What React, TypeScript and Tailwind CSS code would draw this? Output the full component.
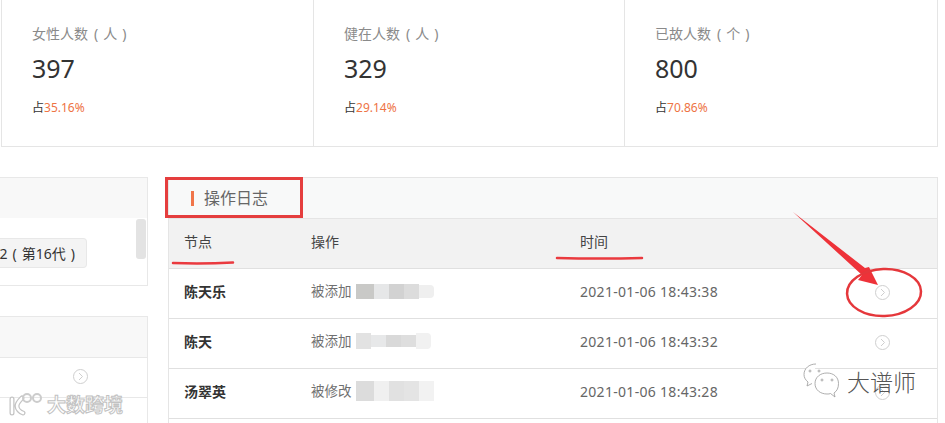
import React from 'react';

const cjk = "font-['Noto_Sans','Noto_Sans_CJK_SC',sans-serif]";

const stats = [
  { label: '女性人数', unit: '人', value: '397', pct: '35.16%', width: 'w-[312px]' },
  { label: '健在人数', unit: '人', value: '329', pct: '29.14%', width: 'w-[311px]' },
  { label: '已故人数', unit: '个', value: '800', pct: '70.86%', width: 'flex-1' },
];

const rows = [
  {
    name: '陈天乐',
    op: '被添加',
    time: '2021-01-06 18:43:38',
    blur: ['bg-[#c9c9c7] h-[15px] w-[18px]', 'bg-[#e6e7e8] h-[15px] w-[15px]', 'bg-[#d2d2d2] h-[15px] w-[15px]', 'bg-[#dcdcdc] h-[15px] w-[15px]', 'bg-[#efefef] h-[13px] w-[15px] rounded-r-[4px]'],
  },
  {
    name: '陈天',
    op: '被添加',
    time: '2021-01-06 18:43:32',
    blur: ['bg-[#e2e2e2] h-[16px] w-[15px]', 'bg-[#e7e8e9] h-[12px] w-[15px]', 'bg-[#d9d9d9] h-[12px] w-[15px]', 'bg-[#dedede] h-[12px] w-[15px]', 'bg-[#f1f1f1] h-[16px] w-[15px] rounded-r-[4px]'],
  },
  {
    name: '汤翠英',
    op: '被修改',
    time: '2021-01-06 18:43:28',
    blur: ['bg-[#dcdcdc] h-[20px] w-[18px]', 'bg-[#f0f0f0] h-[20px] w-[15px]', 'bg-[#e1e1e1] h-[20px] w-[15px]', 'bg-[#e4e4e4] h-[20px] w-[15px]', 'bg-[#f2f2f2] h-[20px] w-[15px]'],
  },
];

const ArrowCircle = () => (
  <svg width="15" height="15" viewBox="0 0 15 15" fill="none" stroke="#cfcfcf" strokeWidth="1">
    <circle cx="7.500" cy="7.500" r="7" />
    <path d="M6 4l3.500 3.500L6 11" />
  </svg>
);

const Annotations = () => (
  <svg className="absolute left-0 top-0 pointer-events-none" width="945" height="423" viewBox="0 0 945 423" fill="none">
    <rect x="166.500" y="178.500" width="135" height="38" stroke="#e53e3e" strokeWidth="3" />
    <path d="M173 263 Q203 264 233 262.500" stroke="#ea3a3f" strokeWidth="2.500" strokeLinecap="round" />
    <path d="M557 258 Q600 259 642 258" stroke="#ea3a3f" strokeWidth="2.500" strokeLinecap="round" />
    <path d="M793 212 L865 268 L869 267 L878 285 L858 280 L862 275 Z" fill="#ee3239" />
    <ellipse cx="884" cy="292.500" rx="37" ry="23.500" stroke="#e5373b" strokeWidth="2.500" transform="rotate(-2 884 292)" />
  </svg>
);

const Watermarks = () => (
  <>
    <div className="absolute left-[9px] top-[391px] flex items-center gap-[4px]">
      <svg width="34" height="26" viewBox="0 0 34 26" fill="none" strokeLinecap="round">
        <g stroke="#c4c4c4" strokeWidth="5">
          <path d="M3 8v14M13 7C9 11 8 13 8 15c0 3 3 6 6 7" />
        </g>
        <g stroke="#fff" strokeWidth="2.500">
          <path d="M3 8v14M13 7C9 11 8 13 8 15c0 3 3 6 6 7" />
        </g>
        <circle cx="18" cy="7" r="4" stroke="#cccccc" strokeWidth="2" />
        <circle cx="28" cy="7" r="4" stroke="#cccccc" strokeWidth="2" />
      </svg>
      <span className="text-[19px] leading-[26px] font-bold text-white [-webkit-text-stroke:1px_#c2c2c2] font-['Noto_Sans_CJK_SC',sans-serif]">大数跨境</span>
    </div>
    <div className="absolute left-[803px] top-[363px] flex items-center gap-[8px]">
      <svg width="36" height="35" viewBox="0 0 36 35" fill="none" stroke="#999" strokeWidth="0.8">
        <path d="M13 1C6 1 1 5.500 1 11.500c0 3 1.500 5.500 4 7.500l-1 4 5-2.500" fill="#fff" />
        <path d="M24 10c-6.500 0-12 4-12 10.500s5.500 10.500 12 10.500c1.500 0 2.500 0 3.500-.5L32 34l-1-4c3-2 4.500-5 4.500-9.500C35.500 14 30.500 10 24 10z" fill="#fff" />
        <circle cx="7" cy="8" r="1" />
        <circle cx="16" cy="8" r="1" />
        <circle cx="19" cy="17" r="1" />
        <circle cx="29" cy="17" r="1" />
      </svg>
      <span className="text-[23px] leading-[30px] font-light text-[#555] font-['Noto_Sans_CJK_SC',sans-serif]">大谱师</span>
    </div>
  </>
);

export default function App() {
  return (
    <div className={`relative w-[945px] h-[423px] overflow-hidden bg-white ${cjk}`}>
      <div className="ml-px w-[937px] h-[147px] flex border-x border-b border-[#e5e5e5]">
        {stats.map((s, i) => (
          <div key={s.label} className={`${s.width} ${i < 2 ? 'border-r border-[#e5e5e5]' : ''} pl-[30px] pt-[24px]`}>
            <div className="flex text-[14px] leading-[20px] text-[#8a8a8a]">
              {s.label}
              <span className="ml-[6px]">(</span>
              <span className="mx-[5px]">{s.unit}</span>
              <span>)</span>
            </div>
            <div className="mt-[6px] text-[25px] leading-[36px] text-[#333]">{s.value}</div>
            <div className="mt-[13px] text-[12px] leading-[18px] text-[#333]">
              占<span className="text-[#ee7344]">{s.pct}</span>
            </div>
          </div>
        ))}
      </div>

      <div className="mt-[30px] flex gap-[20px]">
        <div className="w-[148px] shrink-0 flex flex-col gap-[30px]">
          <div className="h-[109px] border-y border-r border-[#e8e8e8]">
            <div className="h-[40px] bg-[#f8f8f8]" />
            <div className="flex justify-between h-[67px] pr-[1px] pt-[1px]">
              <div className="mt-[19px] w-[87px] h-[30px] bg-[#f4f4f4] border-y border-r border-[#e8e8e8] rounded-r-[4px] flex items-center justify-end whitespace-nowrap pr-[11px] text-[14px] text-[#333]">
                <span>2</span>
                <span className="ml-[5px]">(</span>
                <span className="mx-[5px]">第16代</span>
                <span>)</span>
              </div>
              <div className="w-[10px] h-[40px] bg-[#e3e3e3] rounded-[3px]" />
            </div>
          </div>
          <div className="border-t border-r border-[#e8e8e8]">
            <div className="h-[41px] bg-[#f8f8f8] border-b border-[#e8e8e8]" />
            <div className="h-[40px] border-b border-[#e8e8e8] flex items-center justify-end pr-[59px] pb-[2px]">
              <ArrowCircle />
            </div>
            <div className="h-[40px]" />
          </div>
        </div>

        <div className="w-[770px] shrink-0 border-t border-x border-[#e5e5e5]">
          <div className="h-[41px] bg-[#f8f9f9] flex items-center pl-[22px] border-b border-[#e5e5e5]">
            <span className="w-[3px] h-[15px] bg-[#f0754a]" />
            <span className="ml-[10px] text-[16px] text-[#666]">操作日志</span>
          </div>
          <div className="h-[50px] bg-[#f2f2f2] border-b border-[#e0e0e0] grid grid-cols-[127px_269px_1fr] items-center pl-[15px] pb-[5px] text-[14px] text-[#444]">
            <span>节点</span>
            <span>操作</span>
            <span>时间</span>
          </div>
          {rows.map((r) => (
            <div key={r.name} className="h-[50px] border-b border-[#e0e0e0] grid grid-cols-[127px_269px_295px_1fr] items-center pl-[15px] pb-[5px]">
              <span className="text-[14px] font-bold text-[#333]">{r.name}</span>
              <span className="flex items-center text-[13.500px] text-[#707070]">
                {r.op}
                <span className="ml-[4px] flex items-center blur-[0.5px]">
                  {r.blur.map((b, i) => (
                    <span key={i} className={b} />
                  ))}
                </span>
              </span>
              <span className="text-[14px] tracking-[0.3px] text-[#666]">{r.time}</span>
              <span className="translate-y-[1px]"><ArrowCircle /></span>
            </div>
          ))}
        </div>
      </div>

      <Annotations />
      <Watermarks />
    </div>
  );
}
